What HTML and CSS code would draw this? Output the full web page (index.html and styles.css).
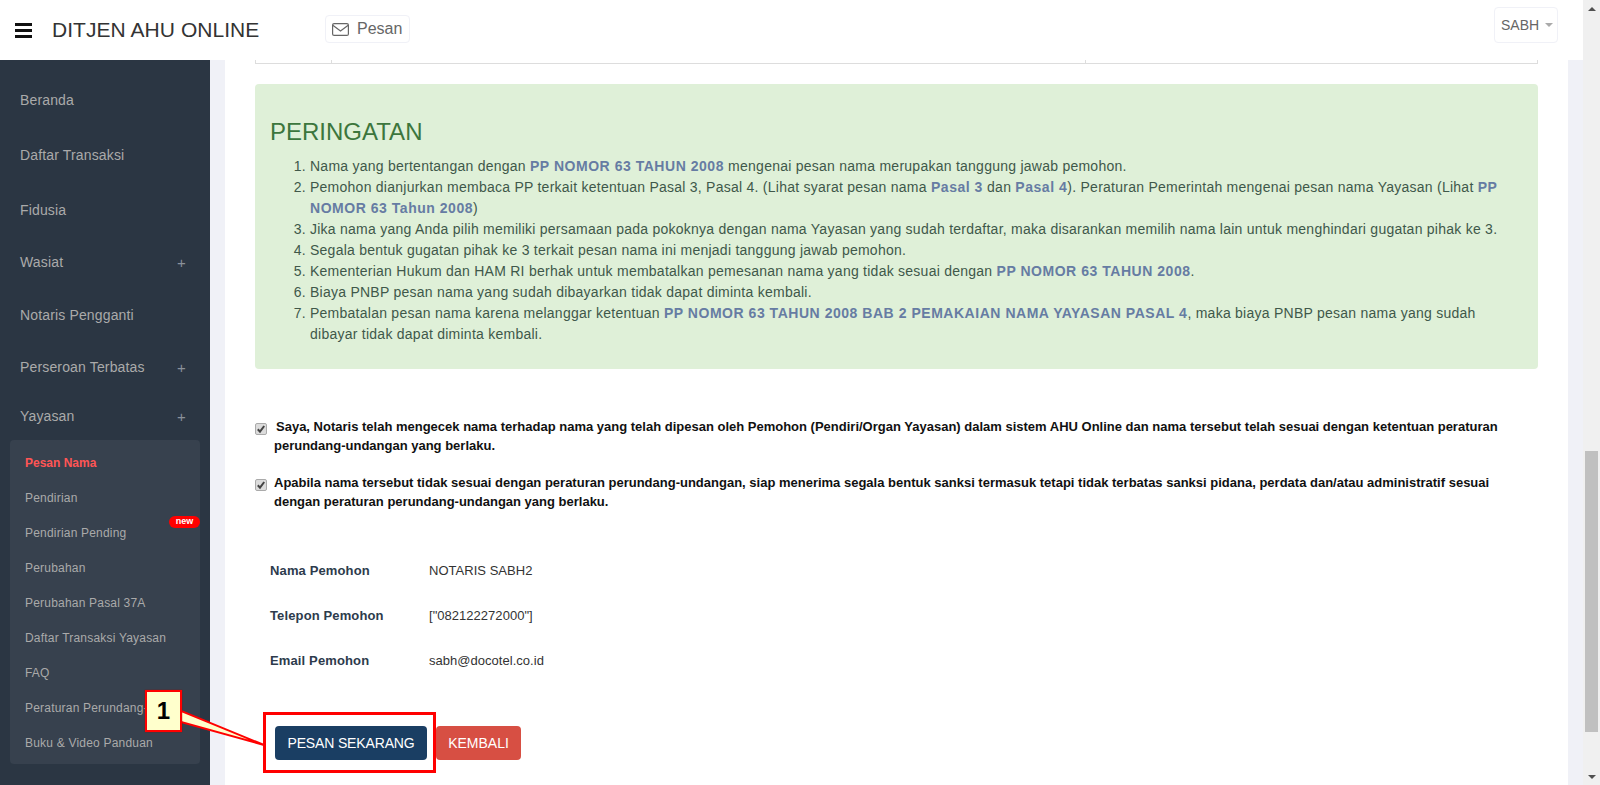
FILE: index.html
```html
<!DOCTYPE html>
<html lang="id">
<head>
<meta charset="utf-8">
<title>DITJEN AHU ONLINE</title>
<link rel="stylesheet" href="styles.css">
</head>
<body>
<div class="app">
  <div class="viewport">
    <header class="topbar">
      <div class="menu-toggle"><span></span><span></span><span></span></div>
      <div class="brand">DITJEN AHU ONLINE</div>
      <div class="msg-btn">
        <svg class="msg-icon" width="17" height="13" viewBox="0 0 17 13"><rect x="0.6" y="0.6" width="15.8" height="11.8" rx="1.5" fill="none" stroke="#666" stroke-width="1.2"/><path d="M0.8 2.2 8.5 8 16.2 2.2" fill="none" stroke="#666" stroke-width="1.2"/></svg>
        <span>Pesan</span>
      </div>
      <div class="user-btn"><span>SABH</span><i class="caret"></i></div>
    </header>
    <div class="body-row">
      <nav class="sidebar">
        <a class="nav-item nav-a">Beranda</a>
        <a class="nav-item nav-a">Daftar Transaksi</a>
        <a class="nav-item nav-a">Fidusia</a>
        <a class="nav-item nav-w">Wasiat<span class="plus">+</span></a>
        <a class="nav-item nav-n">Notaris Pengganti</a>
        <a class="nav-item nav-p">Perseroan Terbatas<span class="plus">+</span></a>
        <a class="nav-item nav-y">Yayasan<span class="plus">+</span></a>
        <div class="submenu">
          <a class="sub-item active">Pesan Nama</a>
          <a class="sub-item">Pendirian</a>
          <a class="sub-item">Pendirian Pending<span class="badge-new">new</span></a>
          <a class="sub-item">Perubahan</a>
          <a class="sub-item">Perubahan Pasal 37A</a>
          <a class="sub-item">Daftar Transaksi Yayasan</a>
          <a class="sub-item">FAQ</a>
          <a class="sub-item">Peraturan Perundang-UU</a>
          <a class="sub-item">Buku &amp; Video Panduan</a>
        </div>
      </nav>
      <main class="main">
        <div class="card">
          <div class="table-tail"><div></div><div></div><div></div></div>
          <section class="alert">
            <h3 class="alert-title">PERINGATAN</h3>
            <ol class="alert-list">
              <li>Nama yang bertentangan dengan <b>PP NOMOR 63 TAHUN 2008</b> mengenai pesan nama merupakan tanggung jawab pemohon.</li>
              <li>Pemohon dianjurkan membaca PP terkait ketentuan Pasal 3, Pasal 4. (Lihat syarat pesan nama <b>Pasal 3</b> dan <b>Pasal 4</b>). Peraturan Pemerintah mengenai pesan nama Yayasan (Lihat <b>PP NOMOR 63 Tahun 2008</b>)</li>
              <li>Jika nama yang Anda pilih memiliki persamaan pada pokoknya dengan nama Yayasan yang sudah terdaftar, maka disarankan memilih nama lain untuk menghindari gugatan pihak ke 3.</li>
              <li>Segala bentuk gugatan pihak ke 3 terkait pesan nama ini menjadi tanggung jawab pemohon.</li>
              <li>Kementerian Hukum dan HAM RI berhak untuk membatalkan pemesanan nama yang tidak sesuai dengan <b>PP NOMOR 63 TAHUN 2008</b>.</li>
              <li>Biaya PNBP pesan nama yang sudah dibayarkan tidak dapat diminta kembali.</li>
              <li>Pembatalan pesan nama karena melanggar ketentuan <b>PP NOMOR 63 TAHUN 2008 BAB 2 PEMAKAIAN NAMA YAYASAN PASAL 4</b>, maka biaya PNBP pesan nama yang sudah dibayar tidak dapat diminta kembali.</li>
            </ol>
          </section>
          <label class="check check-one"><svg class="check-box" width="12" height="12" viewBox="0 0 12 12"><rect x="0.5" y="0.5" width="11" height="11" rx="1.5" fill="#dcdcdc" stroke="#aaa"/><path d="M2.8 6.2 5 8.6 9.2 3" fill="none" stroke="#444" stroke-width="2"/></svg><span>Saya, Notaris telah mengecek nama terhadap nama yang telah dipesan oleh Pemohon (Pendiri/Organ Yayasan) dalam sistem AHU Online dan nama tersebut telah sesuai dengan ketentuan peraturan perundang-undangan yang berlaku.</span></label>
          <label class="check check-two"><svg class="check-box" width="12" height="12" viewBox="0 0 12 12"><rect x="0.5" y="0.5" width="11" height="11" rx="1.5" fill="#dcdcdc" stroke="#aaa"/><path d="M2.8 6.2 5 8.6 9.2 3" fill="none" stroke="#444" stroke-width="2"/></svg><span>Apabila nama tersebut tidak sesuai dengan peraturan perundang-undangan, siap menerima segala bentuk sanksi termasuk tetapi tidak terbatas sanksi pidana, perdata dan/atau administratif sesuai dengan peraturan perundang-undangan yang berlaku.</span></label>
          <dl class="info">
            <div class="info-row"><dt>Nama Pemohon</dt><dd>NOTARIS SABH2</dd></div>
            <div class="info-row"><dt>Telepon Pemohon</dt><dd>["082122272000"]</dd></div>
            <div class="info-row"><dt>Email Pemohon</dt><dd>sabh@docotel.co.id</dd></div>
          </dl>
          <div class="actions">
            <a class="btn btn-primary">PESAN SEKARANG</a>
            <a class="btn btn-danger">KEMBALI</a>
          </div>
        </div>
      </main>
    </div>
    <svg class="callout-line" width="90" height="50" viewBox="0 0 90 50"><path d="M0 1 83 35 0 12Z" fill="#ffffcc" stroke="#f00" stroke-width="2"/></svg>
    <div class="callout-box">1</div>
    <div class="callout-rect"></div>
  </div>
  <aside class="scrollbar">
    <div class="scroll-btn"><i class="arrow-up"></i></div>
    <div class="scroll-track"><div class="scroll-thumb"></div></div>
    <div class="scroll-btn"><i class="arrow-down"></i></div>
  </aside>
</div>
</body>
</html>
```

FILE: styles.css
```css
* { box-sizing: border-box; }
html, body { margin: 0; height: 100%; overflow: hidden; }
body { font-family: "Liberation Sans", Arial, sans-serif; font-size: 14px; color: #333; }
.app { display: flex; width: 1600px; height: 785px; }
.viewport { position: relative; width: 1583px; height: 785px; display: flex; flex-direction: column; overflow: hidden; }

.topbar { height: 60px; background: #fff; display: flex; align-items: center; flex: none; position: relative; }
.menu-toggle { width: 17px; margin-left: 15px; display: flex; flex-direction: column; gap: 3px; }
.menu-toggle span { display: block; height: 3px; background: #111; }
.brand { margin-left: 20px; font-size: 21px; letter-spacing: 0.05px; color: #333; width: 273px; }
.msg-btn { display: flex; align-items: center; gap: 8px; height: 28px; width: 85px; padding-left: 6px; border: 1px solid #f0f1f7; border-radius: 4px; color: #666; font-size: 16px; margin-top: -2px; }
.user-btn { margin-left: auto; margin-right: 25px; margin-top: -10px; width: 64px; height: 36px; display: flex; align-items: center; padding-left: 6px; gap: 6px; border: 1px solid #f0f1f7; border-radius: 4px; color: #666; font-size: 14px; }
.caret { width: 0; height: 0; border-left: 4px solid transparent; border-right: 4px solid transparent; border-top: 4px solid #aaa; }

.body-row { flex: 1; display: flex; min-height: 0; }
.sidebar { width: 210px; flex: none; background: #2b3643; display: flex; flex-direction: column; padding-top: 12px; }
.nav-item { display: flex; align-items: center; justify-content: space-between; padding: 0 24px 0 20px; color: #aaa; font-size: 14px; letter-spacing: 0.15px; flex: none; }
.nav-a { height: 55px; }
.nav-w { height: 50px; }
.nav-n { height: 56px; }
.nav-p { height: 48px; }
.nav-y { height: 49px; padding-top: 1px; }
.plus { font-size: 15px; color: #8a919a; }
.submenu { margin: 0 10px; height: 324px; width: 190px; background: #37414e; border-radius: 4px; padding-top: 6px; }
.sub-item { display: block; position: relative; height: 35px; line-height: 35px; padding-left: 15px; font-size: 12px; letter-spacing: 0.2px; color: #aaa; white-space: nowrap; }
.sub-item.active { color: #f55; font-weight: bold; letter-spacing: 0; }
.badge-new { position: absolute; right: 0; top: 0; width: 31px; height: 12px; border-radius: 6px; background: #f00; color: #fff; font-size: 9px; font-weight: bold; line-height: 10px; text-align: center; letter-spacing: 0; }

.main { flex: 1; background: #f0f1f7; padding: 0 15px; min-width: 0; }
.card { background: #fff; height: 100%; padding: 0 30px; }
.table-tail { display: grid; grid-template-columns: 75px 754px 1fr; height: 4px; border: 1px solid #ddd; border-top: 0; }
.table-tail div + div { border-left: 1px solid #ddd; }
.alert { margin-top: 20px; height: 285px; background: #dff0d8; border-radius: 4px; padding: 35px 15px 0; color: #40584a; }
.alert-title { margin: 0; font-size: 24px; font-weight: normal; color: #3c763d; line-height: 26px; }
.alert-list { margin: 11px 0 0; padding-left: 40px; line-height: 21px; letter-spacing: 0.25px; }
.alert-list b { color: #667ca3; letter-spacing: 0.53px; }
.check { display: flex; align-items: flex-start; font-weight: bold; font-size: 13px; line-height: 18.57px; color: #111; }
.check-box { margin: 5px 7px 0 0; flex: none; }
.check-one { margin-top: 49px; }
.check-one span { text-indent: 2px; }
.check-two { margin-top: 19px; }
.info { margin: 37px 0 0 15px; font-size: 13px; letter-spacing: 0.03px; color: #333; }
.info-row { display: flex; height: 45px; line-height: 45px; }
.info dt { width: 159px; font-weight: bold; color: #2d3b4c; letter-spacing: 0.13px; }
.info dd { margin: 0; }
.actions { display: flex; margin: 43px 0 0 20px; gap: 9px; }
.btn { display: flex; align-items: center; justify-content: center; height: 34px; border-radius: 4px; color: #fff; font-size: 14px; }
.btn-primary { width: 152px; background: #1a3e63; letter-spacing: -0.15px; }
.btn-danger { width: 85px; background: #d74f43; }

.callout-box { position: absolute; left: 145px; top: 690px; width: 37px; height: 42px; background: #ffffcc; border: 2px solid #f00; color: #000; font-size: 24px; font-weight: bold; text-align: center; line-height: 38px; box-shadow: 0 0 1px #900; }
.callout-line { position: absolute; left: 181px; top: 710px; }
.callout-rect { position: absolute; left: 263px; top: 712px; width: 173px; height: 61px; border: 3px solid #f00; }

.scrollbar { width: 17px; height: 785px; background: #f0f0f0; display: flex; flex-direction: column; }
.scroll-btn { height: 17px; display: flex; align-items: center; justify-content: center; flex: none; }
.scroll-track { flex: 1; padding: 434px 2px 36px; }
.scroll-thumb { height: 100%; background: #c0c0c0; margin-left: 0; }
.arrow-up { border-left: 4px solid transparent; border-right: 4px solid transparent; border-bottom: 4px solid #505050; }
.arrow-down { border-left: 4px solid transparent; border-right: 4px solid transparent; border-top: 4px solid #505050; }
```
